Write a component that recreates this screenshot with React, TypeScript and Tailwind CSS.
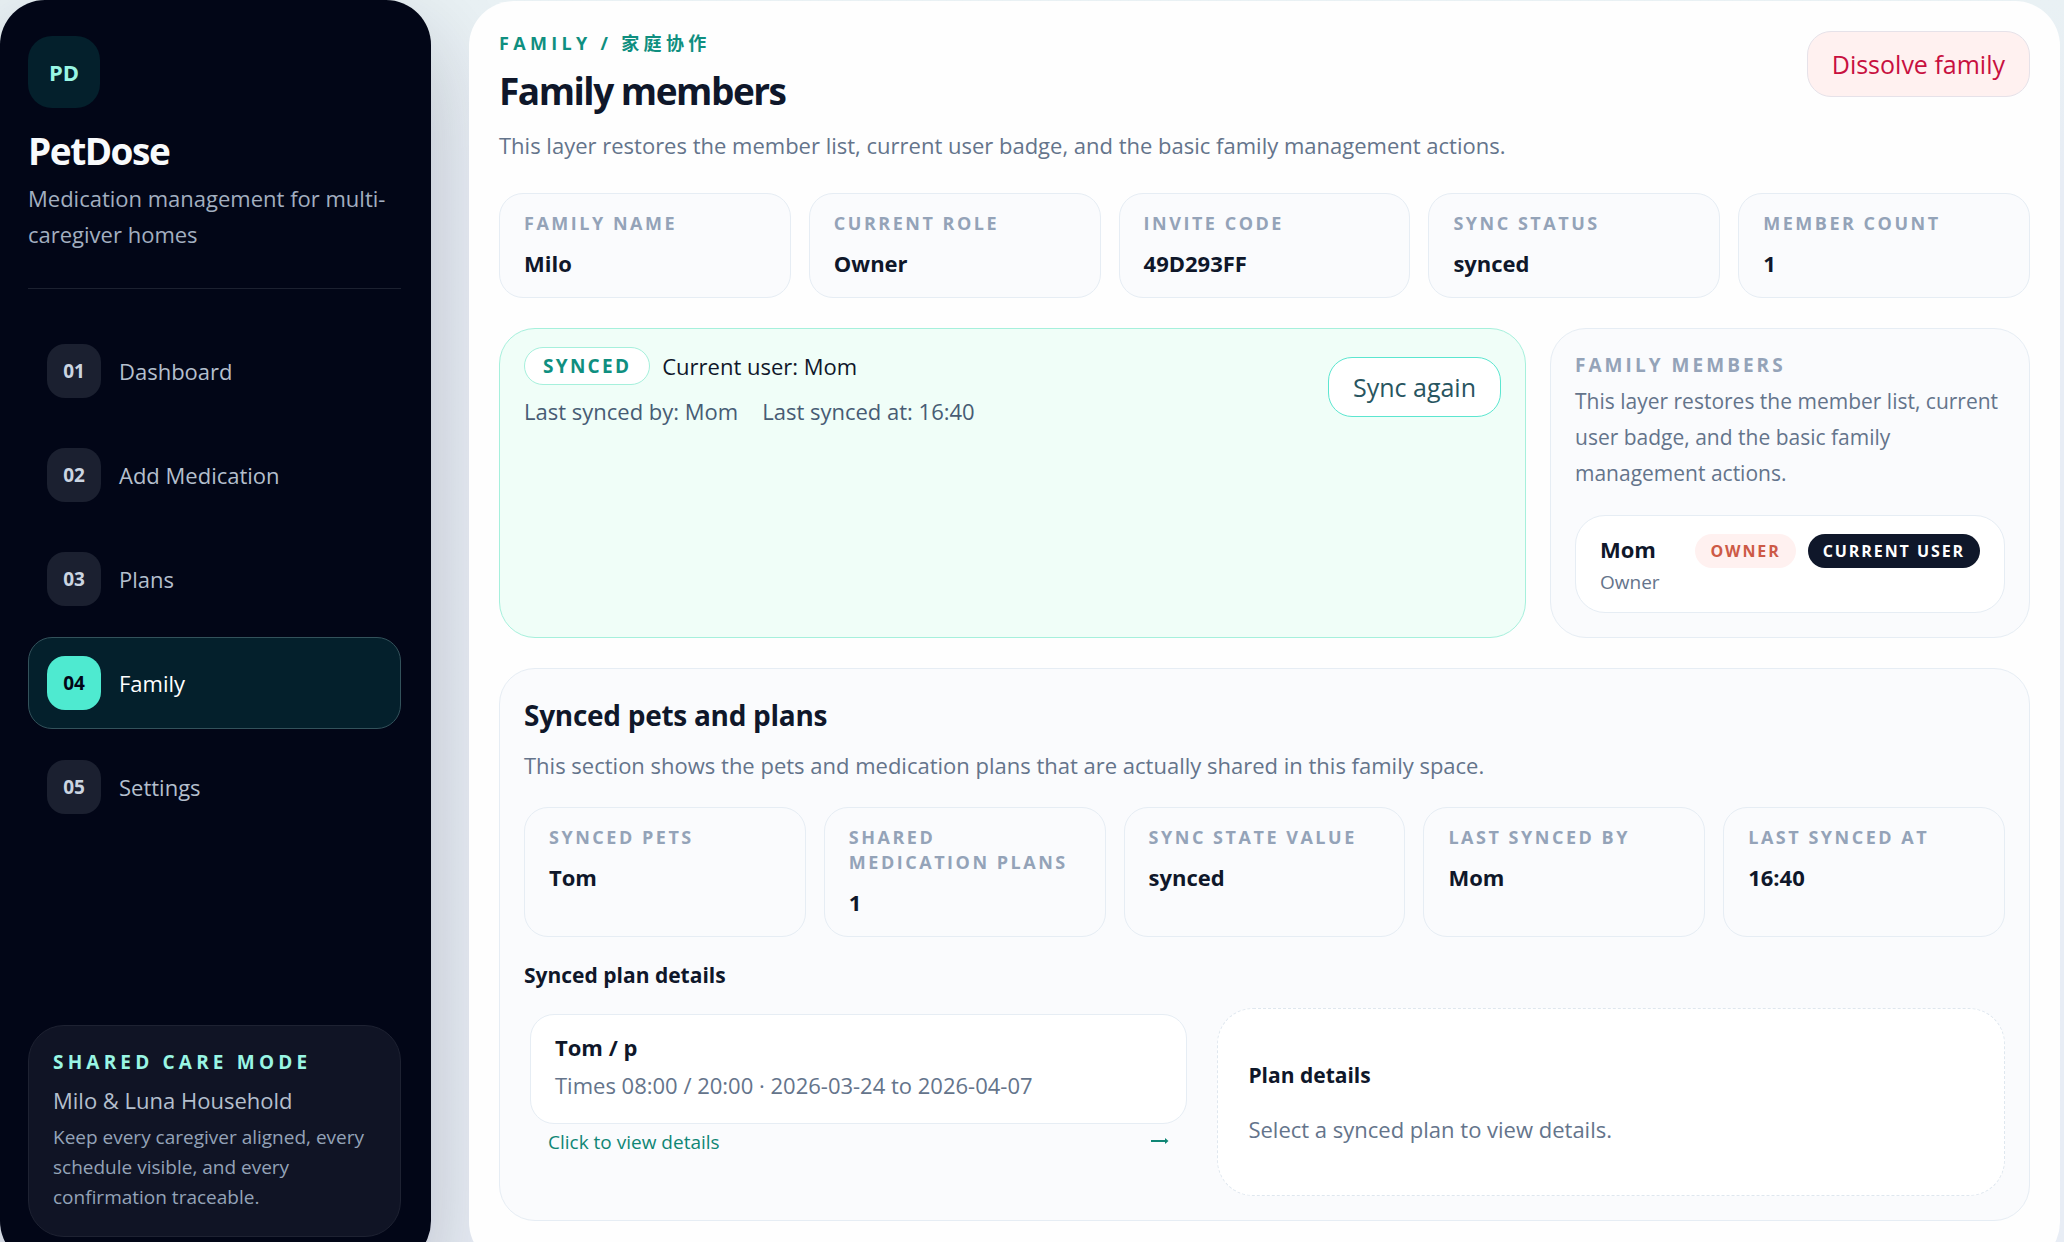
const NAV = [
  { id: '01', label: 'Dashboard' },
  { id: '02', label: 'Add Medication' },
  { id: '03', label: 'Plans' },
  { id: '04', label: 'Family', active: true },
  { id: '05', label: 'Settings' },
];

const FAMILY_STATS = [
  { label: 'Family name', value: 'Milo' },
  { label: 'Current role', value: 'Owner' },
  { label: 'Invite code', value: '49D293FF' },
  { label: 'Sync status', value: 'synced' },
  { label: 'Member count', value: '1' },
];

const SYNC_STATS = [
  { label: 'Synced pets', value: 'Tom' },
  { label: 'Shared medication plans', value: '1' },
  { label: 'Sync state value', value: 'synced' },
  { label: 'Last synced by', value: 'Mom' },
  { label: 'Last synced at', value: '16:40' },
];

type Stat = { label: string; value: string };

function StatGrid({ items }: { items: Stat[] }) {
  return (
    <dl className="grid grid-cols-5 gap-[18px]">
      {items.map((item) => (
        <div
          key={item.label}
          className="rounded-3xl border border-[#e6edf4] bg-[#fafbfd] px-6 pt-[17px] pb-3.5"
        >
          <dt className="text-lg leading-[25px] font-bold tracking-[0.14em] text-[#94a3b8] uppercase">
            {item.label}
          </dt>
          <dd className="mt-[7px] text-[22px] leading-10 font-bold text-[#0f172a]">{item.value}</dd>
        </div>
      ))}
    </dl>
  );
}

function Sidebar() {
  return (
    <aside className="flex h-[calc(100vh+24px)] w-[431px] shrink-0 flex-col rounded-[45px] bg-[#020617] pt-9 pr-[30px] pb-[29px] pl-7 shadow-[0_36px_90px_rgba(15,23,42,0.22)]">
      <header className="border-b border-[#1c2130] pb-9">
        <div className="flex size-[72px] items-center justify-center rounded-3xl bg-[#04202c] text-[22px] leading-8 font-bold text-[#99f6e4]">
          PD
        </div>
        <p className="mt-[22px] text-[37px] leading-[42px] font-bold tracking-[-0.04em] text-[#f8fafc]">PetDose</p>
        <p className="mt-2 text-[22px] leading-9 text-[#a3afc0]">
          Medication management for multi-caregiver homes
        </p>
      </header>
      <nav className="mt-9 flex flex-col gap-3">
        {NAV.map((item) => (
          <a
            key={item.id}
            href={'#' + item.label.toLowerCase().replace(' ', '-')}
            aria-current={item.active ? 'page' : undefined}
            className={
              item.active
                ? 'flex items-center gap-[18px] rounded-3xl border border-[#33525b] bg-[#04202c] p-[18px] text-white'
                : 'flex items-center gap-[18px] rounded-3xl border border-transparent p-[18px] text-[#b4bfcd]'
            }
          >
            <span
              className={
                item.active
                  ? 'flex size-[54px] items-center justify-center rounded-[18px] bg-[#4eead0] text-[19px] font-bold text-[#020617]'
                  : 'flex size-[54px] items-center justify-center rounded-[18px] bg-[#1b2030] text-[19px] font-bold text-[#cbd5e1]'
              }
            >
              {item.id}
            </span>
            <span className="text-[22px] leading-8 font-medium">{item.label}</span>
          </a>
        ))}
      </nav>
      <section className="mt-auto rounded-[36px] border border-[#1e2232] bg-[#101425] px-6 pt-6 pb-6">
        <h2 className="text-[19px] leading-6 font-bold tracking-[0.22em] text-[#99f6e4] uppercase">
          Shared care mode
        </h2>
        <p className="mt-2 text-[22px] leading-9 text-[#b4bfcd]">Milo &amp; Luna Household</p>
        <p className="mt-1 text-[19px] leading-[30px] text-[#94a3b8]">
          Keep every caregiver aligned, every schedule visible, and every confirmation traceable.
        </p>
      </section>
    </aside>
  );
}

function SyncPanel() {
  return (
    <section className="flex items-start justify-between rounded-[36px] border border-[#a6f0dc] bg-[#f0fef8] px-6 pt-[18px] pb-6">
      <div>
        <div className="flex items-center gap-3">
          <span className="rounded-full border border-[#a6f0dc] bg-white px-[18px] py-1.5 text-[19px] leading-6 font-bold tracking-[0.12em] text-[#0f8f80]">
            SYNCED
          </span>
          <span className="text-[22px] leading-9 text-[#0f172a]">Current user: Mom</span>
        </div>
        <div className="mt-2 flex gap-6 text-[22px] leading-9 text-[#475c74]">
          <span>Last synced by: Mom</span>
          <span>Last synced at: 16:40</span>
        </div>
      </div>
      <button
        type="button"
        className="mt-2.5 rounded-3xl border border-[#5ce6d0] bg-white px-6 py-3 text-[25px] leading-[34px] text-[#285560]"
      >
        Sync again
      </button>
    </section>
  );
}

function MembersPanel() {
  return (
    <section className="rounded-[36px] border border-[#e6edf4] bg-[#fafbfd] p-6">
      <h2 className="text-[19px] leading-6 font-bold tracking-[0.16em] text-[#94a3b8] uppercase">
        Family members
      </h2>
      <p className="mt-1.5 text-[21px] leading-9 text-[#64748b]">
        This layer restores the member list, current user badge, and the basic family management actions.
      </p>
      <article className="mt-6 flex items-start justify-between rounded-[30px] border border-[#e6edf4] bg-white px-6 pt-[18px] pb-4">
        <div>
          <p className="text-[22px] leading-[30px] font-bold text-[#0f172a]">Mom</p>
          <p className="mt-1 text-[19px] leading-7 text-[#64748b]">Owner</p>
        </div>
        <div className="flex gap-3">
          <span className="rounded-full bg-[#fff1f0] px-[15px] py-1.5 text-base leading-[22px] font-bold tracking-[0.12em] text-[#cd5a46]">
            OWNER
          </span>
          <span className="rounded-full bg-[#0f172a] px-[15px] py-1.5 text-base leading-[22px] font-bold tracking-[0.12em] text-white">
            CURRENT USER
          </span>
        </div>
      </article>
    </section>
  );
}

function SyncedPlans() {
  return (
    <section className="mt-[30px] rounded-[36px] border border-[#e6edf4] bg-[#fafbfd] p-6">
      <h2 className="mt-1 text-[28px] leading-9 font-bold tracking-[-0.01em] text-[#0f172a]">
        Synced pets and plans
      </h2>
      <p className="mt-3.5 mb-6 text-[22px] leading-9 text-[#64748b]">
        This section shows the pets and medication plans that are actually shared in this family space.
      </p>
      <StatGrid items={SYNC_STATS} />
      <h3 className="mt-[22px] text-[21px] leading-8 font-bold text-[#0f172a]">Synced plan details</h3>
      <div className="mt-[17px] grid grid-cols-[17fr_20fr] items-start gap-6">
        <button type="button" className="p-1.5 text-left">
          <span className="block rounded-3xl border border-[#e6edf4] bg-white px-6 pt-4 pb-5">
            <span className="block text-[22px] leading-8 font-bold text-[#0f172a]">Tom / p</span>
            <span className="mt-1 block text-[22px] leading-9 text-[#64748b]">
              Times 08:00 / 20:00 · 2026-03-24 to 2026-04-07
            </span>
          </span>
          <span className="flex justify-between px-[18px] pt-0.5 text-[19px] leading-8 text-[#0f8675]">
            <span>Click to view details</span>
            <svg className="mt-2" width="18" height="14" viewBox="0 0 18 14" fill="none" aria-hidden="true">
              <path d="M0 7h16" stroke="currentColor" strokeWidth="2" />
              <path d="M14 4 17.5 7 14 10z" fill="currentColor" />
            </svg>
          </span>
        </button>
        <section className="rounded-[36px] border border-dashed border-[#dfe7ef] bg-white px-[30px] py-12">
          <h4 className="text-[21px] leading-9 font-bold text-[#0f172a]">Plan details</h4>
          <p className="mt-[18px] text-[22px] leading-9 text-[#64748b]">Select a synced plan to view details.</p>
        </section>
      </div>
    </section>
  );
}

export default function App() {
  return (
    <div className="flex h-screen gap-[38px] overflow-hidden bg-[#e8edf4] bg-linear-to-b from-[#e9f1f4] to-[#e8edf5] to-15% pr-1 font-['Open_Sans','Noto_Sans_CJK_SC',sans-serif] text-[#0f172a]">
      <Sidebar />
      <main className="mt-px h-[calc(100vh+24px)] min-w-0 flex-1 rounded-[45px] bg-[#fefefe] px-[30px] pt-[30px]">
        <header className="flex items-start justify-between">
          <div>
            <p className="text-lg leading-6 font-bold tracking-[0.24em] text-[#0f8f80]">FAMILY / 家庭协作</p>
            <h1 className="mt-3 text-[37px] leading-[48px] font-bold tracking-[-0.04em]">Family members</h1>
            <p className="mt-3 text-[22px] leading-9 text-[#64748b]">
              This layer restores the member list, current user badge, and the basic family management actions.
            </p>
          </div>
          <button
            type="button"
            className="rounded-3xl border border-[#e6e2e9] bg-[#fff1f0] px-6 py-3.5 text-[25px] leading-9 text-[#c8103f]"
          >
            Dissolve family
          </button>
        </header>
        <div className="mt-[30px]">
          <StatGrid items={FAMILY_STATS} />
        </div>
        <div className="mt-[30px] grid grid-cols-[minmax(0,1fr)_480px] gap-6">
          <SyncPanel />
          <MembersPanel />
        </div>
        <SyncedPlans />
      </main>
    </div>
  );
}
